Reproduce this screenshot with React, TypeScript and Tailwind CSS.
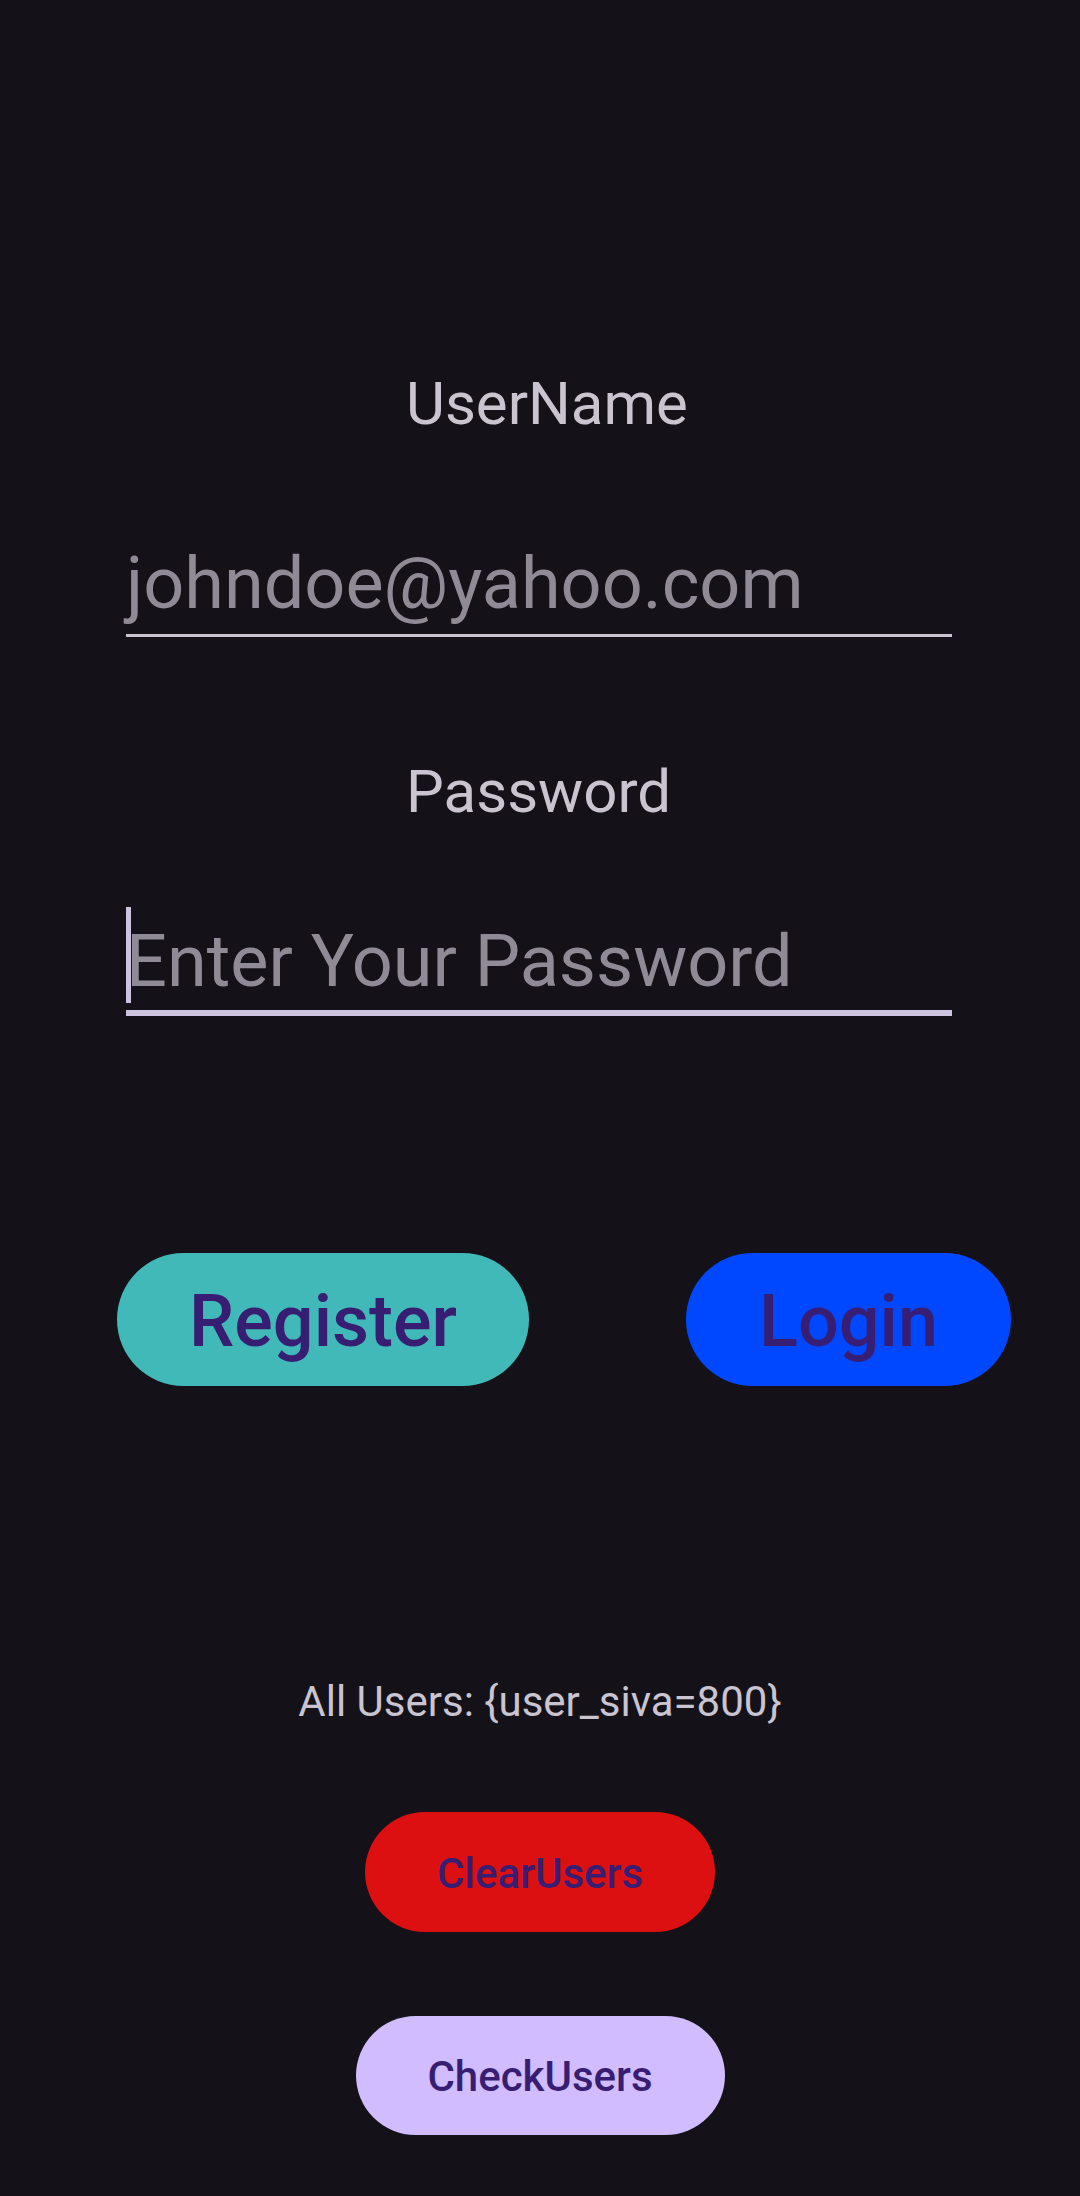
import React from 'react';

const font = { fontFamily: 'Roboto, "Noto Sans", sans-serif' };

function Label({ text }: { text: string }) {
  return (
    <div className="pl-[406px] text-[60px] leading-[70px] text-[#cac4d0]">{text}</div>
  );
}

function Field({ placeholder, focused }: { placeholder: string; focused?: boolean }) {
  return (
    <div
      className={
        focused
          ? 'relative ml-[126px] w-[826px] pb-[8px] border-b-[6px] border-[#cdc2df]'
          : 'relative ml-[126px] w-[826px] pb-[10px] border-b-[3px] border-[#cac4d0]'
      }
    >
      {focused && (
        <div className="absolute left-0 top-[-15px] h-[96px] w-[5px] bg-[#cdc2df]" />
      )}
      <div className="text-[72px] leading-[80px] text-[#8f8a96] whitespace-nowrap">
        {placeholder}
      </div>
    </div>
  );
}

export default function App() {
  return (
    <div className="w-[1080px] min-h-[2196px] bg-[#141218] flex flex-col" style={font}>
      <div className="pt-[369px]">
        <Label text="UserName" />
      </div>
      <div className="mt-[105px]">
        <Field placeholder="johndoe@yahoo.com" />
      </div>
      <div className="mt-[120px]">
        <Label text="Password" />
      </div>
      <div className="mt-[95px]">
        <Field placeholder="Enter Your Password" focused />
      </div>

      <div className="mt-[237px] flex items-center">
        <button className="ml-[117px] w-[412px] h-[133px] rounded-full bg-[#41b9b9] text-[#381e72] text-[72px] font-medium leading-none pt-[4px]">
          Register
        </button>
        <button className="ml-[157px] w-[325px] h-[133px] rounded-full bg-[#0048ff] text-[#381e72] text-[72px] font-medium leading-none pt-[4px]">
          Login
        </button>
      </div>

      <div className="mt-[291px] text-center text-[42px] leading-[50px] text-[#cac4d0]">
        All Users: {'{'}user_siva=800{'}'}
      </div>

      <div className="mt-[85px] flex justify-center">
        <button className="w-[350px] h-[120px] rounded-full bg-[#dc1010] text-[#381e72] text-[42px] font-medium leading-none pt-[3px]">
          ClearUsers
        </button>
      </div>
      <div className="mt-[84px] flex justify-center">
        <button className="w-[369px] h-[119px] rounded-full bg-[#d0bcfe] text-[#381e72] text-[42px] font-medium leading-none pt-[3px]">
          CheckUsers
        </button>
      </div>
    </div>
  );
}
